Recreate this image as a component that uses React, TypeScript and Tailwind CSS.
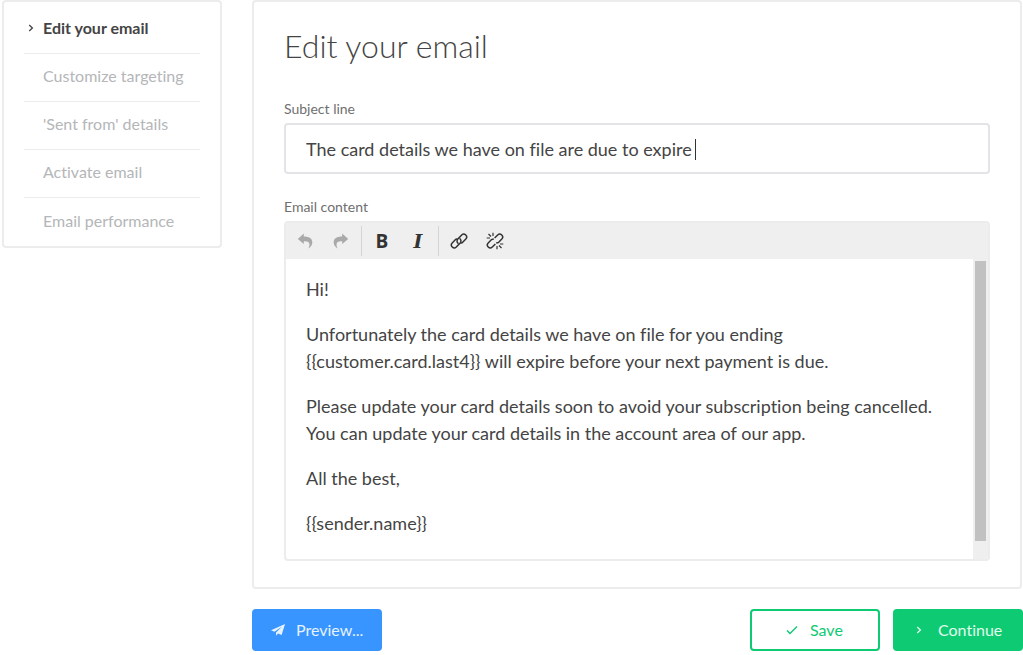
import { useState } from "react";

type Step = {
  label: string;
  href: string;
};

const steps: Step[] = [
  { label: "Edit your email", href: "#edit" },
  { label: "Customize targeting", href: "#targeting" },
  { label: "'Sent from' details", href: "#sender" },
  { label: "Activate email", href: "#activate" },
  { label: "Email performance", href: "#performance" },
];

const toolButton = "flex h-9 w-9 items-center justify-center text-[#333]";
const historyButton = "flex h-9 w-9 items-center justify-center text-[#a9a9a9]";
const actionButton = "flex h-[42px] w-[130px] items-center rounded-[4px] text-[16px]";

function ChevronIcon({ className }: { className?: string }) {
  return (
    <svg viewBox="0 0 6 8" className={className} fill="none" stroke="currentColor" strokeWidth="1.3" aria-hidden="true">
      <path d="M1.2 1 4.4 4 1.2 7" />
    </svg>
  );
}

function UndoIcon({ className }: { className?: string }) {
  return (
    <svg viewBox="0 0 16 16" className={className} fill="currentColor" aria-hidden="true">
      <path d="M6.800.5.800 6l6 5V8.200c3.600-.3 5.700.6 5.700 3.300 0 1.300-.5 2.600-1.100 3.900 2.500-1.600 3.900-3.600 3.900-6 0-3.700-3.200-5.800-8.500-5.800z" />
    </svg>
  );
}

function LinkIcon() {
  return (
    <svg viewBox="0 0 18 18" className="size-[18px]" fill="none" stroke="currentColor" strokeWidth="1.5" strokeLinecap="round" aria-hidden="true">
      <path d="M8 11.200a2.900 2.900 0 0 1-.2-4.100L11.700 3a2.900 2.900 0 0 1 4.100 4.100L12.700 10.200a2.900 2.900 0 0 1-1.500.8" />
      <path d="M10 6.800a2.900 2.900 0 0 1 .2 4.100L6.300 15a2.900 2.900 0 0 1-4.100-4.100L5.300 7.800a2.900 2.900 0 0 1 1.500-.8" />
    </svg>
  );
}

function UnlinkIcon() {
  return (
    <svg viewBox="0 0 18 18" className="size-[18px]" fill="none" stroke="currentColor" strokeWidth="1.5" aria-hidden="true">
      <path d="M8.600 6 11.700 3a2.900 2.900 0 0 1 4.100 4.100L12.700 10.200a2.500 2.500 0 0 1-2.500.5" />
      <path d="M9.400 12 6.300 15a2.900 2.900 0 0 1-4.100-4.100L5.300 7.800a2.500 2.500 0 0 1 2.500-.5" />
      <path strokeWidth="1.200" d="M7 .8v3.200M2.500 2 5 4.500M.7 6h3.300M11 17.200V14M15.500 16 13 13.500M17.300 12H14" />
    </svg>
  );
}

export default function App() {
  const [subject, setSubject] = useState("The card details we have on file are due to expire");

  return (
    <div className="flex items-start gap-[30px] bg-white pl-0.5 font-['Lato',sans-serif] text-[#444] [font-variant-ligatures:none]">
      <nav aria-label="Email steps" className="w-[220px] shrink-0 rounded-[4px] border-2 border-[#ececec] px-5 pt-1">
        <ul className="divide-y divide-[#ececec]">
          {steps.map((step, index) => (
            <li key={step.label} className="h-12">
              <a
                href={step.href}
                aria-current={index === 0 ? "step" : undefined}
                className={
                  index === 0
                    ? "flex h-full items-center gap-[9px] pb-[3px] pl-1 text-[16px] font-bold"
                    : "flex h-full items-center pb-[3px] pl-[19px] text-[16px] text-[#b4b6b8]"
                }
              >
                {index === 0 ? <ChevronIcon className="h-2 w-1.5" /> : null}
                {step.label}
              </a>
            </li>
          ))}
        </ul>
      </nav>

      <main className="min-w-0 flex-1">
        <section className="mr-px rounded-[4px] border-2 border-[#ececec] px-[30px] pt-[23px] pb-[26px]">
          <h1 className="text-[32px] leading-[42px] font-light">Edit your email</h1>

          <label htmlFor="subject" className="mt-8 block text-[14px] leading-5 text-[#6f6f6f]">
            Subject line
          </label>
          <div className="relative mt-1">
            <input
              id="subject"
              type="text"
              value={subject}
              onChange={(event) => setSubject(event.target.value)}
              className="peer block h-[51px] w-full rounded-[4px] border-2 border-[#e3e3e8] bg-white px-5 text-[18px] outline-none"
            />
            {/* resting caret, replaced by the native one on focus */}
            <span aria-hidden="true" className="pointer-events-none absolute top-4 left-[411px] h-[21px] w-px bg-[#333] peer-focus:hidden" />
          </div>

          <p id="content-label" className="mt-[23px] text-[14px] leading-5 text-[#6f6f6f]">
            Email content
          </p>
          <div className="mt-1 overflow-hidden rounded-[4px] border-2 border-[#ececec]">
            <div role="toolbar" aria-label="Formatting" className="flex h-9 items-center bg-[#efefef] pl-px">
              <button type="button" aria-label="Undo" className={historyButton}>
                <UndoIcon className="size-4" />
              </button>
              <button type="button" aria-label="Redo" className={historyButton}>
                <UndoIcon className="size-4 -scale-x-100" />
              </button>
              <span className="mx-0.5 h-[30px] w-px bg-[#d4d4d4]" />
              <button type="button" aria-label="Bold" className={toolButton}>
                <span className="font-['Open_Sans',sans-serif] text-[19px] font-bold">B</span>
              </button>
              <button type="button" aria-label="Italic" className={toolButton}>
                <span className="font-['DejaVu_Serif',serif] text-[19px] font-bold italic">I</span>
              </button>
              <span className="mx-0.5 h-[30px] w-px bg-[#d4d4d4]" />
              <button type="button" aria-label="Insert link" className={toolButton}>
                <LinkIcon />
              </button>
              <button type="button" aria-label="Remove link" className={toolButton}>
                <UnlinkIcon />
              </button>
            </div>

            <div className="flex">
              <div
                role="textbox"
                aria-multiline="true"
                aria-labelledby="content-label"
                contentEditable
                suppressContentEditableWarning
                className="min-w-0 flex-1 space-y-[18px] px-5 pt-[17px] pb-[22px] text-[18px] leading-[27px] outline-none"
              >
                <p>Hi!</p>
                <p>
                  Unfortunately the card details we have on file for you ending
                  <br />
                  {"{{customer.card.last4}}"} will expire before your next payment is due.
                </p>
                <p>
                  Please update your card details soon to avoid your subscription being cancelled.
                  <br />
                  You can update your card details in the account area of our app.
                </p>
                <p>All the best,</p>
                <p>{"{{sender.name}}"}</p>
              </div>
              <div aria-hidden="true" className="w-[15px] bg-[#efefef] px-0.5 pt-0.5">
                <div className="h-[280px] bg-[#c1c1c1]" />
              </div>
            </div>
          </div>
        </section>

        <div className="mt-5 flex gap-[13px]">
          <button type="button" className={`${actionButton} mr-auto gap-[11px] bg-[#3894ff] pl-[19px] text-[#e4f3ff]`}>
            <svg viewBox="0 0 14 12" className="h-3 w-3.5" fill="currentColor" aria-hidden="true">
              <path d="M14 0 0 6.200l3.500 1.600L11 2.600 5 8.600v3.200l2-2.300 3.600 1.600z" />
            </svg>
            Preview...
          </button>
          <button type="button" className={`${actionButton} gap-3 border-2 border-[#0dca73] pl-[34px] text-[#0dca73]`}>
            <svg viewBox="0 0 12 10" className="h-2.5 w-3" fill="none" stroke="currentColor" strokeWidth="1.400" aria-hidden="true">
              <path d="m1 5.400 3 3L11 1.500" />
            </svg>
            Save
          </button>
          <button type="button" className={`${actionButton} gap-4 bg-[#0dca73] pl-[23px] text-[#e2fbee]`}>
            <ChevronIcon className="h-2 w-1.5" />
            Continue
          </button>
        </div>
      </main>
    </div>
  );
}
